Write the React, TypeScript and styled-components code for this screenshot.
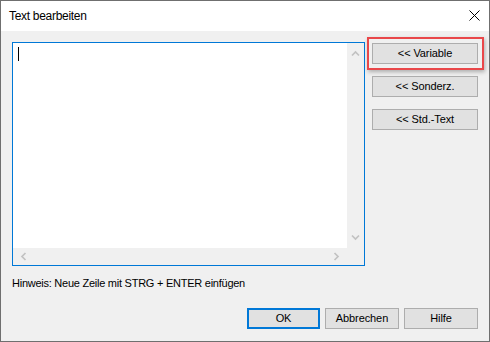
import React from "react";
import styled, { createGlobalStyle } from "styled-components";

const GlobalStyle = createGlobalStyle`
  html, body { margin: 0; padding: 0; background: #ffffff; }
  body { font-family: "Liberation Sans", Arial, sans-serif; }
  * { box-sizing: border-box; }
`;

const Window = styled.div`
  width: 490px;
  height: 342px;
  border: 1px solid #6f6f6f;
  display: flex;
  flex-direction: column;
  background: #f0f0f0;
  font-family: "Liberation Sans", Arial, sans-serif;
  font-size: 11px;
  color: #000;
`;

const TitleBar = styled.div`
  height: 30px;
  background: #ffffff;
  display: flex;
  align-items: center;
  justify-content: space-between;
  padding: 0 9px 1px 8px;
  font-size: 12px;
  letter-spacing: -0.3px;
`;

const CloseButton = styled.div`
  width: 12px;
  height: 12px;
  display: flex;
  align-items: center;
  justify-content: center;
`;

const Body = styled.div`
  flex: 1;
  display: flex;
  flex-direction: column;
  padding: 11px 11px 0 11px;
`;

const MainRow = styled.div`
  display: flex;
  gap: 7px;
`;

const EditBox = styled.div`
  width: 354px;
  height: 224px;
  border: 1px solid #0078d7;
  display: grid;
  grid-template-columns: 1fr 17px;
  grid-template-rows: 1fr 17px;
  background: #f0f0f0;
`;

const EditContent = styled.div`
  background: #ffffff;
  padding: 4px 0 0 5px;
`;

const Caret = styled.div`
  width: 1px;
  height: 14px;
  background: #000;
`;

const ScrollBar = styled.div<{ $vertical?: boolean }>`
  background: #f0f0f0;
  display: flex;
  flex-direction: ${(p) => (p.$vertical ? "column" : "row")};
  justify-content: space-between;
  align-items: center;
  padding: ${(p) => (p.$vertical ? "2px 0" : "0 2px")};
`;

const ArrowCell = styled.div`
  width: 17px;
  height: 17px;
  display: flex;
  align-items: center;
  justify-content: center;
`;

const Corner = styled.div`
  background: #f0f0f0;
`;

const SideButtons = styled.div`
  display: flex;
  flex-direction: column;
  gap: 12px;
  padding-top: 1px;
`;

const Button = styled.div<{ $width?: number; $default?: boolean }>`
  position: relative;
  width: ${(p) => p.$width ?? 106}px;
  height: 21px;
  background: #e1e1e1;
  border: 1px solid ${(p) => (p.$default ? "#0078d7" : "#adadad")};
  box-shadow: ${(p) => (p.$default ? "inset 0 0 0 1px #0078d7" : "none")};
  display: flex;
  align-items: center;
  justify-content: center;
  font-size: 11px;
  letter-spacing: -0.1px;
  line-height: 1;
  padding-bottom: 1px;
`;

const Highlight = styled.div`
  position: absolute;
  left: -6px;
  top: -7px;
  right: -7px;
  bottom: -7px;
  border: 2px solid #e9474a;
  box-shadow: 1px 2px 4px rgba(0, 0, 0, 0.28);
  pointer-events: none;
`;

const Hint = styled.div`
  margin-top: 10px;
  line-height: 15px;
  font-size: 11px;
  letter-spacing: -0.25px;
`;

const Footer = styled.div`
  margin-top: 17px;
  display: flex;
  justify-content: flex-end;
  gap: 5px;
`;

const Chevron = ({ dir }: { dir: "up" | "down" | "left" | "right" }) => {
  const rot = { up: 0, right: 90, down: 180, left: 270 }[dir];
  return (
    <svg width="9" height="9" viewBox="0 0 9 9" style={{ transform: `rotate(${rot}deg)` }}>
      <path d="M1 6.5 L4.5 3 L8 6.5" fill="none" stroke="#c2c2c2" strokeWidth="1.7" />
    </svg>
  );
};

export default function App() {
  return (
    <>
      <GlobalStyle />
      <Window>
        <TitleBar>
          <span>Text bearbeiten</span>
          <CloseButton>
            <svg width="11" height="11" viewBox="0 0 11 11">
              <path d="M0.5 0.5 L10.5 10.5 M10.5 0.5 L0.5 10.5" stroke="#000" strokeWidth="1" />
            </svg>
          </CloseButton>
        </TitleBar>
        <Body>
          <MainRow>
            <EditBox>
              <EditContent>
                <Caret />
              </EditContent>
              <ScrollBar $vertical>
                <ArrowCell><Chevron dir="up" /></ArrowCell>
                <ArrowCell><Chevron dir="down" /></ArrowCell>
              </ScrollBar>
              <ScrollBar>
                <ArrowCell><Chevron dir="left" /></ArrowCell>
                <ArrowCell><Chevron dir="right" /></ArrowCell>
              </ScrollBar>
              <Corner />
            </EditBox>
            <SideButtons>
              <Button>
                &lt;&lt; Variable
                <Highlight />
              </Button>
              <Button>&lt;&lt; Sonderz.</Button>
              <Button>&lt;&lt; Std.-Text</Button>
            </SideButtons>
          </MainRow>
          <Hint>Hinweis: Neue Zeile mit STRG + ENTER einfügen</Hint>
          <Footer>
            <Button $width={73} $default>OK</Button>
            <Button $width={74}>Abbrechen</Button>
            <Button $width={74}>Hilfe</Button>
          </Footer>
        </Body>
      </Window>
    </>
  );
}
